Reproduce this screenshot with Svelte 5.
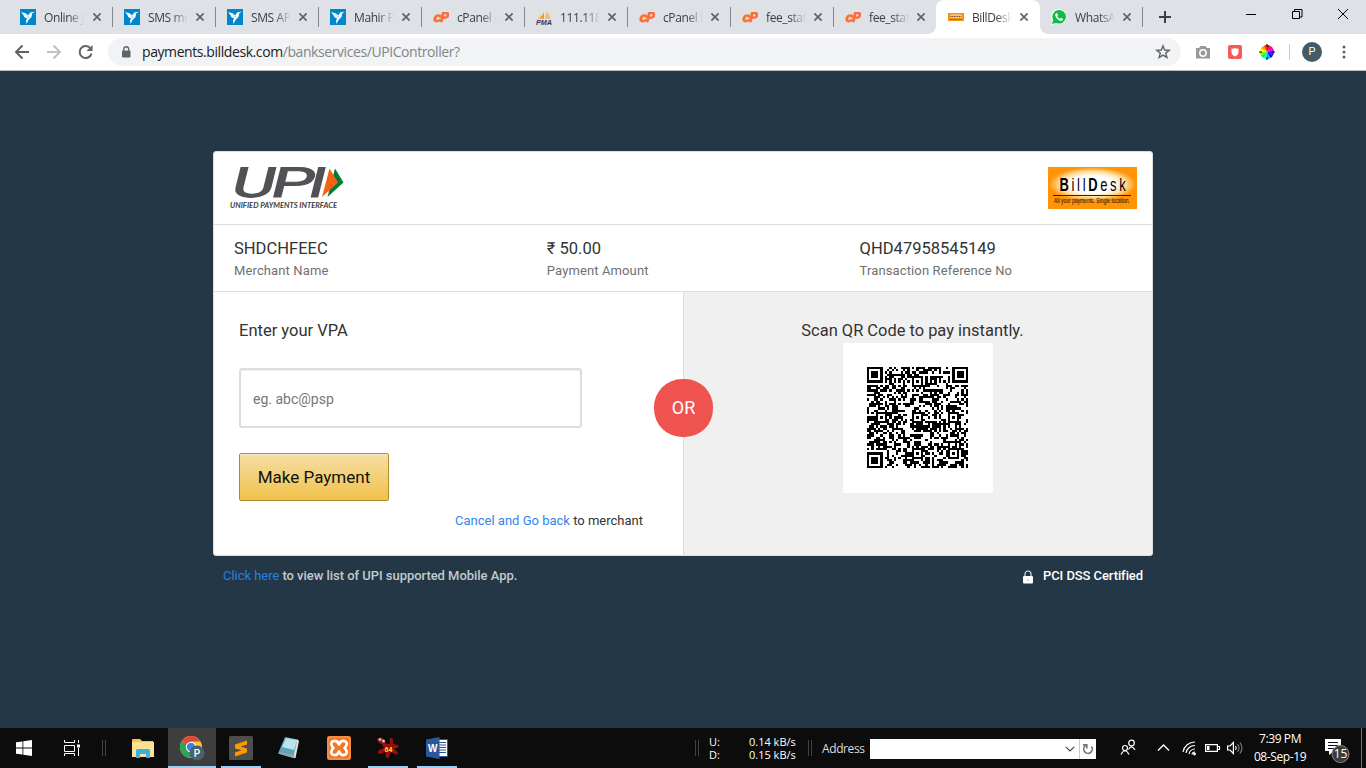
<script>
  const tabs = [
    { icon: 'bird', title: 'Online J' },
    { icon: 'bird', title: 'SMS mo' },
    { icon: 'bird', title: 'SMS AP' },
    { icon: 'bird', title: 'Mahir P' },
    { icon: 'cp', title: 'cPanel -' },
    { icon: 'pma', title: '111.118' },
    { icon: 'cp', title: 'cPanel F' },
    { icon: 'cp', title: 'fee_stat' },
    { icon: 'cp', title: 'fee_stat' },
    { icon: 'bd', title: 'BillDesk', active: true },
    { icon: 'wa', title: 'WhatsA' }
  ];

  const wheel = ['#f00', '#f0a', '#c0f', '#50f', '#00f', '#0af', '#0fd', '#0f4', '#6f0', '#ff0', '#fa0', '#f40'];
  function slice(i) {
    const a = (i * Math.PI) / 6 - Math.PI / 2;
    const b = a + Math.PI / 6;
    return `M8 8L${8 + 7 * Math.cos(a)} ${8 + 7 * Math.sin(a)}A7 7 0 0 1 ${8 + 7 * Math.cos(b)} ${8 + 7 * Math.sin(b)}Z`;
  }

  const N = 45;
  function qr() {
    let seed = 47958545;
    const rnd = () => {
      seed = (seed * 16807) % 2147483647;
      return seed / 2147483647;
    };
    const m = Array.from({ length: N }, () => Array.from({ length: N }, () => rnd() > 0.47));
    const square = (cx, cy, r, on) => {
      for (let y = cy - r; y <= cy + r; y++)
        for (let x = cx - r; x <= cx + r; x++)
          if (x >= 0 && y >= 0 && x < N && y < N) m[y][x] = on;
    };
    for (let i = 0; i < N; i++) m[6][i] = m[i][6] = i % 2 === 0;
    for (const [x, y] of [[22, 6], [6, 22], [22, 22], [38, 22], [22, 38], [38, 38]]) {
      square(x, y, 2, true);
      square(x, y, 1, false);
      square(x, y, 0, true);
    }
    for (const [x, y] of [[3, 3], [N - 4, 3], [3, N - 4]]) {
      square(x, y, 4, false);
      square(x, y, 3, true);
      square(x, y, 2, false);
      square(x, y, 1, true);
    }
    let d = '';
    m.forEach((row, y) => row.forEach((on, x) => { if (on) d += `M${x} ${y}h1v1h-1z`; }));
    return d;
  }
  const qrPath = qr();
</script>

<div class="screen">
  <header class="tabs">
    {#each tabs as t}
      <div class="tab" class:active={t.active}>
        <svg class="fav" width="16" height="16" viewBox="0 0 16 16">
          {#if t.icon === 'bird'}
            <rect width="16" height="16" fill="#0087cb" />
            <path d="M1 3L6 4.5L8.3 6.2L10.2 3.6L15 2.6L12.3 4.3L11.5 8L8.5 11L6.5 15L6 11.2L7.2 9.5L4.5 8.3L3.4 6Z" fill="#fff" />
            <path d="M7.8 6.4L9.6 9.2M6 5L8 8.8" stroke="#6abde4" stroke-width=".5" />
          {:else if t.icon === 'cp'}
            <g transform="translate(0 13) skewX(-12)" class="cp"><text x="-.3" textLength="8" lengthAdjust="spacingAndGlyphs">c</text><text x="6.500" textLength="8.800" lengthAdjust="spacingAndGlyphs">P</text></g>
          {:else if t.icon === 'pma'}
            <path d="M7 1C8 4 7 7 1 10Q5 8.8 8 10Q8.500 5 7 1Z" fill="#f79a1b" />
            <path d="M10 2Q14 6 14.500 10L9 9.500Q11 6 10 2Z" fill="#fbb85a" />
            <path d="M4 5L3 9L5 8Z" fill="#fbc77c" />
            <text x="0" y="15.600" class="pma" textLength="16" lengthAdjust="spacingAndGlyphs">PMA</text>
          {:else if t.icon === 'bd'}
            <rect y="4" width="16" height="8" fill="#f39313" />
            <rect x="2" y="5.500" width="12" height="3.500" rx="1.500" fill="#fce0a8" />
            <path d="M2.500 7.500h11" stroke="#75501c" stroke-width="1.500" stroke-dasharray="1.200 .5" />
            <path d="M2 10.500h12" stroke="#ad6710" stroke-width=".8" />
          {:else}
            <path d="M0 16L1.300 11.500A7.600 7.600 0 1 1 5 14.600Z" fill="#fff" />
            <path d="M1 15L2.200 11A6.800 6.800 0 1 1 5.300 13.900Z" fill="#12bc45" />
            <path d="M5 4.300C3.300 6 5 8.700 6.600 10.200C8.400 11.900 11 12.600 12 10.700L11.800 9.700L9.900 8.700L9 9.900Q7 9 6.200 7.200L7 6.300L6.200 4.300Z" fill="#fff" />
          {/if}
        </svg>
        <span class="title">{t.title}</span>
        <svg class="x" width="8" height="8" viewBox="0 0 8 8"><path d="M.4 .4L7.600 7.600M7.600 .4L.4 7.600" stroke="#5f6368" stroke-width="1.700" /></svg>
      </div>
    {/each}
    <svg class="plus" width="12" height="12" viewBox="0 0 12 12"><path d="M6 0v12M0 6h12" stroke="#3c4043" stroke-width="2" /></svg>
    <svg class="winctl" width="104" height="12" viewBox="0 0 104 12" fill="none" stroke="#000">
      <path d="M0 6.500h10M46.500 3.500h7v7h-7zM48.500 3V1.500h7.500v7.500h-2M92 1L102 11M102 1L92 11" />
    </svg>
  </header>

  <nav class="toolbar">
    <svg class="navs" width="80" height="16" viewBox="0 0 80 16" fill="none" stroke-width="2">
      <path d="M15 8H2.500M8.500 1.500L2 8L8.500 14.500" stroke="#5f6368" />
      <path d="M33 8H45.500M39.500 1.500L46 8L39.500 14.500" stroke="#bdc1c6" />
      <path d="M76.500 4.500A6 6 0 1 0 77.500 9.500" stroke="#5f6368" />
      <path d="M78.500 1V7H72.500Z" fill="#5f6368" />
    </svg>
    <div class="omnibox">
      <svg width="10" height="13" viewBox="0 0 10 13"><rect x="1" y="4.500" width="8.500" height="7" rx="1" fill="#5f6368" /><path d="M2.800 5V3.200a2.450 2.450 0 0 1 4.900 0V5" fill="none" stroke="#5f6368" stroke-width="1.300" /></svg>
      <span class="url"><b>payments.billdesk.com</b>/bankservices/UPIController?</span>
      <svg class="star" width="16" height="16" viewBox="0 0 16 16"><path d="M8 1.900L9.700 6L14.200 6.300L10.700 9.100L11.900 13.500L8 11.100L4.100 13.500L5.300 9.100L1.800 6.300L6.300 6Z" fill="none" stroke="#5f6368" stroke-width="1.400" /></svg>
    </div>
    <svg width="16" height="16" viewBox="0 0 16 16"><path d="M1 4H4L5.500 2H10.500L12 4H15V14.500H1Z" fill="#999" /><circle cx="8" cy="9" r="3.200" fill="none" stroke="#fff" stroke-width="1.500" /></svg>
    <svg width="16" height="16" viewBox="0 0 16 16"><rect x="1" y="1" width="14" height="14" rx="2" fill="#f65a5b" /><path d="M4.500 4.500Q6.500 5 8 4Q9.500 5 11.500 4.500V8Q11.300 11 8 12.500Q4.700 11 4.500 8Z" fill="#fff" /></svg>
    <svg width="16" height="16" viewBox="0 0 16 16">
      {#each wheel as c, i}<path d={slice(i)} fill={c} />{/each}
      <path d="M8 0v3M8 13v3M0 8h3M13 8h3" stroke="#111" stroke-width="1.200" />
    </svg>
    <i class="tsep"></i>
    <span class="avatar">P</span>
    <svg class="dots" width="4" height="14" viewBox="0 0 4 14" fill="#5f6368"><circle cx="2" cy="2" r="1.500" /><circle cx="2" cy="7" r="1.500" /><circle cx="2" cy="12" r="1.500" /></svg>
  </nav>

  <main>
    <section class="card">
      <div class="logos">
        <svg width="116" height="44" viewBox="0 0 116 44">
          <g transform="translate(-.5 30.200) skewX(-14)" class="upi">
            <text x="0" textLength="43" lengthAdjust="spacingAndGlyphs">U</text>
            <text x="39" textLength="43" lengthAdjust="spacingAndGlyphs">P</text>
            <text x="76.500" textLength="17" lengthAdjust="spacingAndGlyphs">I</text>
          </g>
          <path d="M105 1.500L113.500 15.500L97.500 30Z" fill="#087a35" />
          <path d="M99.500 1.500L108 15.500L92 30Z" fill="#f26316" />
          <text x="0" y="41" class="upisub" textLength="107" lengthAdjust="spacingAndGlyphs">UNIFIED PAYMENTS INTERFACE</text>
        </svg>
        <svg width="89" height="42" viewBox="0 0 89 42">
          <defs><radialGradient id="glow" cx=".5" cy=".48" r=".5"><stop offset=".5" stop-color="#fff" /><stop offset=".75" stop-color="#ffdf9f" /><stop offset="1" stop-color="#ff9408" /></radialGradient></defs>
          <rect width="89" height="42" fill="#ff9408" />
          <rect x="1" y="1" width="87" height="34" fill="url(#glow)" />
          <g transform="translate(11.500 24) scale(.72 1)" class="bd"><text textLength="92" lengthAdjust="spacing"><tspan font-weight="700">B</tspan>ill<tspan font-weight="700">D</tspan>esk</text></g>
          <path d="M5 28.500h78" stroke="#36210a" stroke-width="1.200" />
          <text x="6" y="35.500" class="bdsub" textLength="76" lengthAdjust="spacingAndGlyphs">All your payments. Single location.</text>
        </svg>
      </div>
      <div class="info">
        <div><strong>SHDCHFEEC</strong><span>Merchant Name</span></div>
        <div><strong>₹ 50.00</strong><span>Payment Amount</span></div>
        <div><strong>QHD47958545149</strong><span>Transaction Reference No</span></div>
      </div>
      <div class="body">
        <div class="left">
          <label for="vpa">Enter your VPA</label>
          <input id="vpa" placeholder="eg. abc@psp" />
          <button>Make Payment</button>
          <p><span class="link">Cancel and Go back</span> to merchant</p>
        </div>
        <div class="right">
          <span>Scan QR Code to pay instantly.</span>
          <div class="qr"><svg width="101" height="101" viewBox="0 0 45 45" shape-rendering="crispEdges"><path d={qrPath} /></svg></div>
        </div>
        <div class="or">OR</div>
      </div>
    </section>
    <div class="foot">
      <span><span class="link2">Click here</span> to view list of UPI supported Mobile App.</span>
      <span class="pci"><svg width="12" height="14" viewBox="0 0 12 14"><rect x="1" y="6" width="10" height="7.500" rx="1" fill="#fff" /><path d="M3 6V4a3 3 0 0 1 6 0v2" fill="none" stroke="#ddd" stroke-width="1.200" /><circle cx="6" cy="10" r=".8" fill="#aaa" /></svg>PCI DSS Certified</span>
    </div>
  </main>

  <footer class="taskbar">
    <div class="cell start"><svg width="16" height="16" viewBox="0 0 16 16" fill="#fff"><path d="M0 2.300L6.500 1.400V7.600H0ZM7.300 1.300L16 0V7.600H7.300ZM0 8.400H6.500V14.600L0 13.700ZM7.300 8.400H16V16L7.300 14.700Z" /></svg></div>
    <div class="cell view"><svg width="16" height="16" viewBox="0 0 16 16" fill="none" stroke="#fff"><path d="M.5 0V2.500H10.500V0M.5 5.500H10.500V11.500H.5ZM.5 16V13.500H10.500V16M14.500 0V3M14.500 8V16" /><path d="M13 4.500h3v3h-3z" fill="#fff" stroke="none" /></svg></div>
    <i class="grip"></i>
    <div class="cell files"><svg width="22" height="19" viewBox="0 0 22 19"><path d="M0 1Q0 0 1 0H8L10 2H21V18H0Z" fill="#f5c44d" /><path d="M0 3H22V18H0Z" fill="#fde293" /><path d="M4 19V11.500Q4 10 5.500 10H16.500Q18 10 18 11.500V19H14V15H8V19Z" fill="#39b1e5" /></svg></div>
    <div class="cell chrome"><svg width="26" height="26" viewBox="0 0 26 26">
      <circle cx="12" cy="12" r="11" fill="#f9c83b" />
      <path d="M12 12L2.500 6.500A11 11 0 0 1 21.500 6.500H12Z" fill="#df493d" />
      <path d="M2.500 6.500A11 11 0 0 0 11 23L16 14.500L12 12Z" fill="#2ca35b" />
      <circle cx="12" cy="12" r="5.200" fill="#fff" /><circle cx="12" cy="12" r="4.200" fill="#3f7ee8" />
      <circle cx="18" cy="18" r="7.500" fill="#49606d" /><text x="18" y="22" class="cpf">P</text></svg></div>
    <div class="cell sub on"><svg width="24" height="24" viewBox="0 0 24 24"><rect width="24" height="24" rx="1.500" fill="#4d4d4d" /><path d="M6 8.500L18 4.500V8.500L11.500 10.600L18 12.500V16.500L6 20.500V16.500L12.700 14.300L6 12.500Z" fill="#ff9800" /></svg></div>
    <div class="cell note"><svg width="24" height="24" viewBox="0 0 24 24"><path d="M8 1L21 3.500L16.500 22L1 17.500Z" fill="#5ba3b5" /><path d="M9 2L20.500 4L17 14L5 11Z" fill="#b9e4ea" /><path d="M20.500 3.500L22 5L18.500 22L16 22Z" fill="#e8e4d4" /><path d="M1 17.500L16.500 22L18 19.500L4 16Z" fill="#8fa9ad" /></svg></div>
    <div class="cell xam"><svg width="24" height="24" viewBox="0 0 24 24"><rect width="24" height="24" rx="2" fill="#f37623" /><rect x="1" y="1" width="22" height="22" rx="2" fill="none" stroke="#f9a269" /><path d="M12 8.500C10 3 3 4.500 4.500 9Q5 11 6.500 12Q5 13 4.500 15C3 19.500 10 21 12 15.500C14 21 21 19.500 19.500 15Q19 13 17.500 12Q19 11 19.500 9C21 4.500 14 3 12 8.500Z" fill="none" stroke="#fff" stroke-width="2.700" stroke-linejoin="round" /></svg></div>
    <div class="cell red on"><svg width="24" height="24" viewBox="0 0 24 24"><path d="M1 3Q4 0 8 3L10 8H14L13.500 3Q16 1 17 3.500L17 8L22 9Q24 11 21 12L18 12.500L21.500 16Q23 19 20 18.500L15 16L12.500 22Q10.500 23 9.500 20L9.500 16L4 18Q0 17 3 14L8 12L6 8Q2 8 1 3Z" fill="#9b0d0d" /><circle cx="4" cy="3.500" r="1.500" fill="#bbb" /><circle cx="7.500" cy="5" r="1.500" fill="#ccc" /><text x="8.500" y="16" class="n64">64</text></svg></div>
    <div class="cell word on"><svg width="24" height="24" viewBox="0 0 24 24"><path d="M13 3.500H22.500V20.500H13Z" fill="#fff" stroke="#2b579a" /><path d="M14 6.500h7M14 9h7M14 11.500h7M14 14h7M14 16.500h7" stroke="#2b579a" /><path d="M1 3.500L14.500 1V23L1 20.500Z" fill="#2b579a" /><text x="3" y="16" class="w">W</text></svg></div>
    <i class="grip g2"></i>
    <div class="net"><span>U:</span><span>0.14 kB/s</span><span>D:</span><span>0.15 kB/s</span></div>
    <i class="grip g3"></i>
    <span class="addr">Address</span>
    <div class="abox"><svg width="10" height="6" viewBox="0 0 10 6"><path d="M.8 .8L5 5L9.200 .8" fill="none" stroke="#444" stroke-width="1.200" /></svg><span><svg width="12" height="12" viewBox="0 0 12 12" fill="none" stroke="#777" stroke-width="1.700"><path d="M3.500 2.500A4.300 4.300 0 1 0 9.500 3.500M1 1.800H4.800V5.500" /></svg></span></div>
    <svg class="tray" width="126" height="20" viewBox="0 0 126 20" fill="none" stroke="#fff" stroke-width="1.200">
      <circle cx="11.500" cy="5" r="2.800" /><path d="M8.500 11.500Q11.500 6 15 12" /><circle cx="5" cy="10" r="2.500" /><path d="M1 16.500Q5 9 9 16.500" />
      <path d="M38 12.500L43.500 7L49 12.500" stroke-width="1.400" />
      <g transform="translate(62 3)"><path d="M1 11A12 12 0 0 1 13 1M4 12A9 9 0 0 1 13 4.500M7 13A6 6 0 0 1 13 8M10 13.500A3 3 0 0 1 13 11" /><circle cx="12.500" cy="13" r=".8" fill="#fff" /></g>
      <path d="M85.600 6.600H97.400V13.400H85.600ZM98 8.500h1.500v3H98" /><path d="M87 8h2.500v4H87z" fill="#fff" stroke="none" />
      <path d="M107.600 8H110L113.400 4.500V15.500L110 12H107.600Z" /><path d="M115.500 8Q117 10 115.500 12" /><path d="M117.500 6Q120.500 10 117.500 14M120 4.500Q124 10 120 15.500" stroke="#777" />
    </svg>
    <div class="clock"><span>7:39 PM</span><span>08-Sep-19</span></div>
    <svg class="notif" width="28" height="28" viewBox="0 0 28 28"><path d="M0 3H16V15H9L4 19V15H0Z" fill="#fff" /><path d="M3 6.500h10M3 9.500h10M3 12.500h6" stroke="#111" /><circle cx="15.500" cy="18" r="8.500" fill="#3b3b3b" stroke="#888" /><text x="15.500" y="22.300" class="n15" >15</text></svg>
    <i class="edge"></i>
  </footer>
</div>

<style>
  :global(body) { margin: 0; overflow: hidden; }
  .screen { width: 1366px; height: 768px; display: flex; flex-direction: column; font-family: Roboto, sans-serif; background: #243746; overflow: hidden; }
  svg { display: block; flex: none; }
  .tabs { height: 34px; background: #dee1e6; display: flex; padding-left: 10px; box-sizing: border-box; font-family: "Open Sans", sans-serif; }
  .tab { width: 103px; height: 34px; box-sizing: border-box; display: flex; align-items: center; padding-left: 11px; flex: none; position: relative; }
  .tab:first-child { padding-left: 10px; }
  .tab:first-child .x { margin-left: 9px; }
  .tab::after { content: ""; position: absolute; right: 0; top: 7px; height: 20px; width: 1px; background: #85888c; }
  .tab.active { background: #fff; border-radius: 8px 8px 0 0; margin-left: -1px; width: 104px; padding-left: 12px; }
  .tab.active::after { right: -8px; top: 26px; width: 8px; height: 8px; background: radial-gradient(circle at 100% 0, transparent 7.500px, #fff 8px); }
  .tab.active::before { content: ""; position: absolute; left: -8px; top: 26px; width: 8px; height: 8px; background: radial-gradient(circle at 0 0, transparent 7.500px, #fff 8px); }
  .tab:nth-child(9)::after { display: none; }
  .title { margin-left: 8px; width: 40px; overflow: hidden; white-space: nowrap; font-size: 12px; letter-spacing: -.4px; line-height: 17px; color: #3c4043; mask-image: linear-gradient(90deg, #000 60%, transparent); }
  .x { margin-left: 8px; }
  .plus { margin: 11px 0 0 16px; }
  .winctl { margin: 8px 0 0 75px; }
  .toolbar { height: 36px; background: #fff; border-bottom: 1px solid #b9bcbe; display: flex; align-items: center; box-sizing: content-box; }
  .navs { margin-left: 14px; }
  .omnibox { margin: 0 14px 0 14px; width: 1073px; height: 28px; background: #f1f3f4; border-radius: 14px; display: flex; align-items: center; padding: 0 10px 0 13px; box-sizing: border-box; }
  .url { flex: 1; margin-left: 11px; font: 14px "Open Sans", sans-serif; letter-spacing: -.42px; color: #80868b; padding-bottom: 1px; }
  .url b { font-weight: 400; color: #202124; }
  .toolbar > svg + svg { margin-left: 16px; }
  .tsep { width: 1px; height: 16px; background: #c9ccd0; margin: 0 12px 0 14px; }
  .avatar { width: 20px; height: 20px; border-radius: 50%; background: #455a64; color: #fff; font-size: 11px; text-align: center; line-height: 20px; }
  .dots { margin-left: 20px; }
  main { flex: 1; }
  .card { width: 940px; height: 405px; box-sizing: border-box; border: 1px solid #ddd; border-radius: 3px; margin: 80px auto 0; background: #fff; overflow: hidden; color: #333; }
  .logos { height: 57px; border-bottom: 1px solid #ddd; display: flex; justify-content: space-between; align-items: flex-start; padding: 15px 15px 0 16px; }
  .info { height: 66px; border-bottom: 1px solid #ddd; display: grid; grid-template-columns: repeat(3, 312.800px); padding-left: 20px; }
  .info div { display: flex; flex-direction: column; padding-top: 14px; }
  .info strong { font-weight: 400; font-size: 16.550px; line-height: 20px; color: #333; }
  .info span { font-size: 13px; line-height: 18px; margin-top: 3px; color: #707070; letter-spacing: .12px; }
  .body { height: 263px; display: flex; position: relative; }
  .left { width: 469px; box-sizing: border-box; padding: 29px 40px 0 25px; display: flex; flex-direction: column; align-items: flex-start; }
  label { font-size: 16.500px; line-height: 20px; }
  input { margin-top: 27px; width: 343px; height: 60px; box-sizing: border-box; border: 2px solid #ddd; border-radius: 3px; padding: 2px 12px 0; font: 14px Roboto, sans-serif; box-shadow: inset 0 1px 1px #eee; background: #fff; }
  input::placeholder { color: #777; }
  button { margin-top: 25px; width: 150px; height: 48px; border: 1px solid #b48b2c; border-radius: 2px; background: linear-gradient(#f6dfa5, #f0c14b); box-shadow: inset 0 1px 0 #faecc8; font: 17px Roboto, sans-serif; color: #111; padding: 0; }
  p { margin: 10px 0 0; align-self: flex-end; font-size: 13px; line-height: 20px; }
  .link { color: #2f86eb; }
  .right { flex: 1; background: #f0f0f0; border-left: 1px solid #ddd; display: flex; flex-direction: column; align-items: center; padding: 29px 11px 0 0; font-size: 16.450px; line-height: 20px; }
  .qr { background: #fff; width: 150px; height: 150px; box-sizing: border-box; margin: 2px 0 0 11px; padding: 24px; }
  .or { position: absolute; left: 440px; top: 87px; width: 59px; height: 58px; border-radius: 28px; background: #ef5350; color: #fff; font-size: 18px; line-height: 58px; text-align: center; }
  .foot { width: 920px; margin: 10px auto 0; display: flex; justify-content: space-between; font-size: 13px; letter-spacing: -.04px; line-height: 20px; font-weight: 500; color: #c3cacf; }
  .link2 { color: #2082e8; font-weight: 400; }
  .pci { color: #fff; display: flex; align-items: center; gap: 9px; letter-spacing: -.08px; }
  .pci svg { margin-top: 2px; }
  .cp { font: 900 14px Roboto, sans-serif; fill: #ff6c2c; stroke: #ff6c2c; stroke-width: .3; }
  .pma { font: italic 700 7px "Liberation Sans", sans-serif; fill: #33356b; }
  .upi { font: 400 41.500px Roboto, sans-serif; fill: #525256; stroke: #525256; stroke-width: 1.1; }
  .upisub { font: italic 700 8px Lato, sans-serif; fill: #3d3d40; }
  .bd { font: 18px "Liberation Sans", sans-serif; }
  .bdsub { font: 6.500px "Liberation Sans", sans-serif; fill: #392206; stroke: #392206; stroke-width: .1; }
  .taskbar { height: 40px; background: #0c0c0c; display: flex; align-items: center; color: #fff; font: 12px "Open Sans", sans-serif; }
  .cell { height: 40px; flex: none; display: flex; align-items: center; justify-content: center; box-sizing: border-box; border-bottom: 2px solid transparent; padding-top: 2px; }
  .start { width: 48px; }
  .view { width: 48px; }
  .grip { width: 4px; height: 16px; box-sizing: border-box; border: solid #424242; border-width: 0 1px; margin-left: 6px; flex: none; }
  .files { width: 50px; margin-left: 12px; }
  .chrome { width: 48px; background: #3e3e3e; border-color: #9bcff5; }
  .sub { width: 40px; margin-left: 5px; }
  .on { border-color: #9bcff5; }
  .note { width: 40px; margin-left: 8px; }
  .xam { width: 40px; margin-left: 10px; }
  .red { width: 40px; margin-left: 9px; }
  .word { width: 40px; margin-left: 9px; }
  .g2 { margin-left: 238px; }
  .g3 { margin-left: 12px; }
  .net { display: grid; grid-template-columns: 40px 47px; line-height: 13px; font-size: 11px; letter-spacing: 0; margin-left: 10px; white-space: nowrap; padding-top: 0; }
  .addr { margin-left: 10px; width: 48px; white-space: nowrap; letter-spacing: -.4px; color: #ddd; }
  .abox { width: 226px; height: 20px; background: #fff; display: flex; align-items: center; justify-content: flex-end; flex: none; margin-top: 2px; }
  .abox span { border-left: 1px solid #ccc; margin-left: 4px; width: 16px; height: 20px; display: flex; align-items: center; justify-content: center; }
  .tray { margin-left: 24px; }
  .clock { width: 66px; margin-left: 1px; display: flex; flex-direction: column; align-items: center; line-height: 18px; font-size: 12px; letter-spacing: -.4px; white-space: nowrap; }
  .notif { margin: 4px 0 0 12px; }
  .edge { width: 1px; height: 40px; background: #777; margin-left: 8px; }
  .cpf { font: 500 10px Roboto, sans-serif; fill: #fff; text-anchor: middle; }
  .n64 { font: 700 7px Roboto, sans-serif; fill: #ffdb3b; }
  .w { font: 700 10px "Liberation Sans", sans-serif; fill: #fff; }
  .n15 { font: 12px "Open Sans", sans-serif; fill: #fff; text-anchor: middle; }
</style>
